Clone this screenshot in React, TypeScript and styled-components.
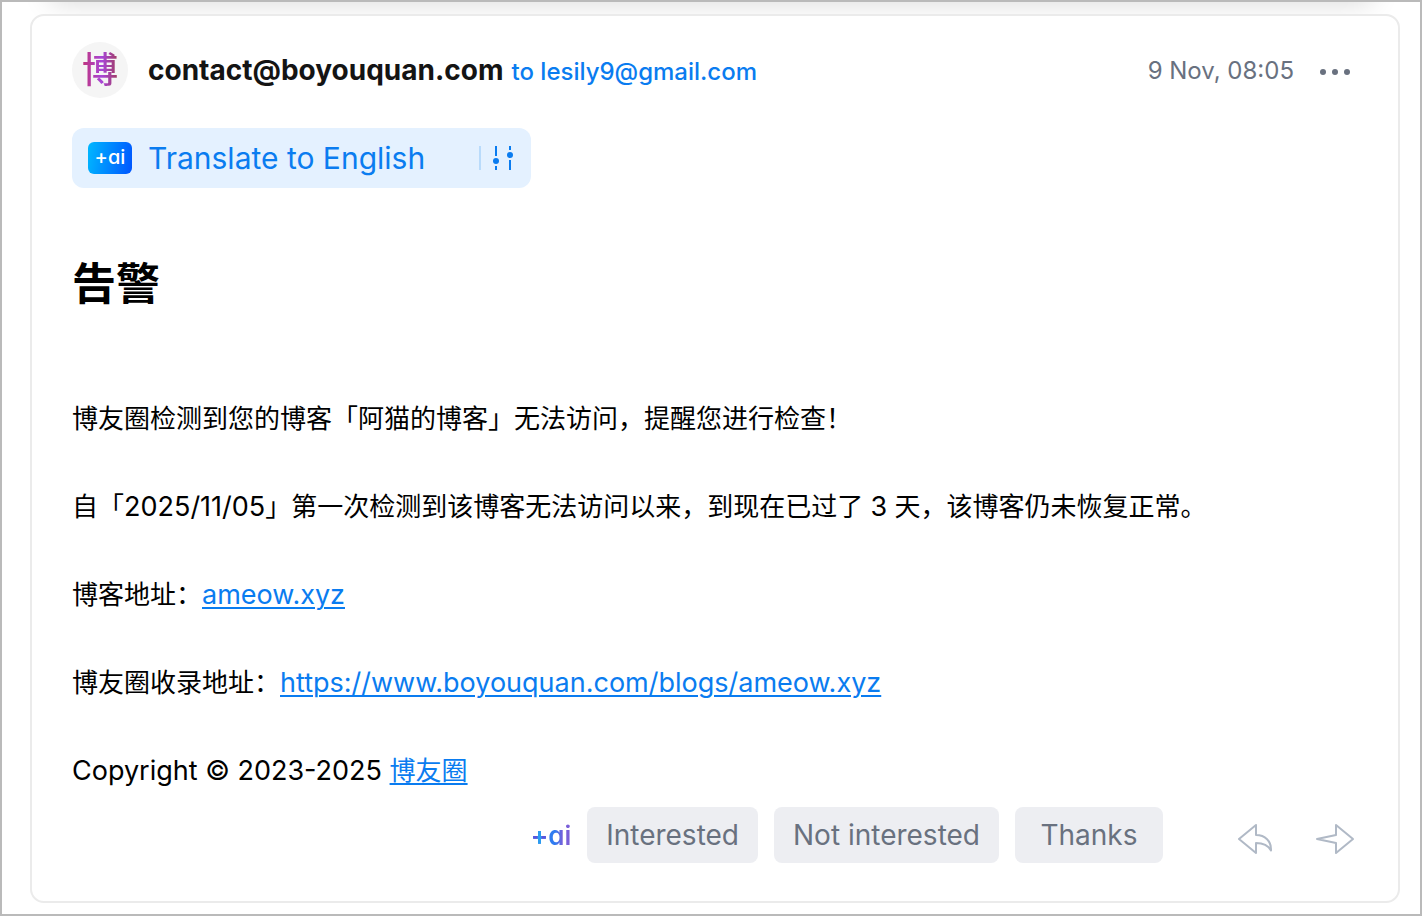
import React from "react";
import styled, { createGlobalStyle } from "styled-components";

const GlobalStyle = createGlobalStyle`
  * { box-sizing: border-box; }
  body {
    margin: 0;
    background: #fff;
    font-family: Inter, "Noto Sans CJK SC", sans-serif;
    color: #000;
  }
  button { font: inherit; border: 0; cursor: pointer; }
`;

const Window = styled.div`
  min-height: 100vh;
  padding: 12px 20px 11px 28px;
  border: 2px solid #bababa;
  position: relative;
  overflow: hidden;
`;

const ToolbarShadow = styled.div`
  position: absolute;
  top: -22px;
  left: 48px;
  right: 48px;
  height: 20px;
  box-shadow: 0 0 28px rgba(0, 0, 0, 0.2);
`;

const Card = styled.article`
  position: relative;
  display: flex;
  flex-direction: column;
  min-height: calc(100vh - 27px);
  padding: 26px 40px 38px;
  border: 2px solid #ebebeb;
  border-radius: 14px;
  background: #fff;
`;

const Header = styled.header`
  display: flex;
  align-items: center;
  height: 56px;
`;

const Avatar = styled.div`
  width: 56px;
  height: 56px;
  margin-right: 20px;
  border-radius: 50%;
  background: #f5f5f5;
  text-align: center;
`;

const AvatarLetter = styled.span`
  font-size: 36px;
  font-weight: 500;
  line-height: 56px;
  background: linear-gradient(90deg, #c0337a 0%, #a846d8 55%, #a03c60 100%);
  background-clip: text;
  color: transparent;
`;

const Addresses = styled.div`
  display: flex;
  align-items: baseline;
  gap: 8px;
  flex: 1;
`;

const Sender = styled.strong`
  font-size: 28px;
  font-weight: 700;
  color: #141414;
`;

const Recipient = styled.a`
  font-size: 24px;
  font-weight: 500;
  color: #0a7cf0;
  text-decoration: none;
`;

const SentAt = styled.time`
  font-size: 24px;
  line-height: 32px;
  padding-top: 2px;
  color: #69717f;
`;

const MoreButton = styled.button`
  width: 48px;
  height: 48px;
  margin-left: 16px;
  padding: 0;
  background: none;
`;

const TranslateBar = styled.div`
  display: flex;
  align-items: center;
  align-self: flex-start;
  height: 60px;
  margin-top: 30px;
  padding: 0 8px 0 16px;
  border-radius: 12px;
  background: #e4f1ff;
`;

const TranslateButton = styled.button`
  display: flex;
  align-items: center;
  gap: 16px;
  padding: 0 54px 0 0;
  background: none;
  font-size: 30px;
  color: #0a7cf0;
`;

const AiBadge = styled.span`
  width: 44px;
  height: 32px;
  border-radius: 6px;
  background: linear-gradient(100deg, #00b8ff, #0055ff);
  color: #fff;
  font-size: 20px;
  line-height: 30px;
  font-weight: 500;
  font-feature-settings: "cv11";
`;

const SettingsButton = styled.button`
  display: flex;
  padding: 0;
  background: none;
`;

const Title = styled.h1`
  margin: 64px 0 0;
  font-size: 44px;
  line-height: 64px;
  font-weight: 700;
`;

const Body = styled.div`
  display: flex;
  flex-direction: column;
  gap: 52px;
  margin-top: 85px;
  font-size: 26px;
  line-height: 36px;
`;

const Paragraph = styled.p`
  margin: 0;
`;

const Latin = styled.span`
  font-size: 27px;
  line-height: 1;
`;

const Link = styled.a`
  color: #0a7cf0;
  font-size: 27px;
  line-height: 1;
  text-decoration: underline;
  text-decoration-thickness: 2px;
  text-underline-offset: 3px;
`;

const CjkLink = styled(Link)`
  font-size: 26px;
`;

const Footer = styled.footer`
  display: flex;
  align-items: center;
  justify-content: flex-end;
  gap: 16px;
  margin-top: auto;
`;

const AiMark = styled.span`
  font-size: 26px;
  font-weight: 600;
  font-feature-settings: "cv11";
  background: linear-gradient(90deg, #2f7bf0 60%, #7a5fd8 80%);
  background-clip: text;
  color: transparent;
`;

const AiPlus = styled.span`
  background: linear-gradient(90deg, #5a55dc 35%, #2a9df0 42%, #2a9df0 58%, #5a55dc 65%);
  background-clip: text;
`;

const ReplyChip = styled.button`
  min-width: 148px;
  height: 56px;
  padding: 0 19px;
  border-radius: 8px;
  background: #edeef2;
  color: #69717f;
  font-size: 28px;
`;

const Actions = styled.div`
  display: flex;
  gap: 32px;
  margin-left: 51px;
`;

const IconButton = styled.button`
  width: 48px;
  height: 48px;
  padding: 0;
  background: none;
`;

export default function App() {
  return (
    <>
      <GlobalStyle />
      <Window>
        <ToolbarShadow />
        <Card>
          <Header>
            <Avatar>
              <AvatarLetter>博</AvatarLetter>
            </Avatar>
            <Addresses>
              <Sender>contact@boyouquan.com</Sender>
              <Recipient href="mailto:lesily9@gmail.com">to lesily9@gmail.com</Recipient>
            </Addresses>
            <SentAt>9 Nov, 08:05</SentAt>
            <MoreButton aria-label="More actions">
              <svg width="48" height="48" viewBox="0 0 48 48" fill="#69717f">
                <circle cx="13" cy="26" r="3" />
                <circle cx="25" cy="26" r="3" />
                <circle cx="37" cy="26" r="3" />
              </svg>
            </MoreButton>
          </Header>

          <TranslateBar>
            <TranslateButton>
              <AiBadge>+ai</AiBadge>
              Translate to English
            </TranslateButton>
            <SettingsButton aria-label="Translation settings">
              <svg width="44" height="32" viewBox="0 0 44 32" fill="none">
                <path d="M1 4v24" stroke="#b9dbfb" strokeWidth="2" />
                <path d="M17 4v10M17 24v4M31 4v4M31 18v10" stroke="#0a7cf0" strokeWidth="2" />
                <circle cx="17" cy="19" r="3" fill="#0a7cf0" />
                <circle cx="31" cy="13" r="3" fill="#0a7cf0" />
              </svg>
            </SettingsButton>
          </TranslateBar>

          <Title>告警</Title>

          <Body>
            <Paragraph>博友圈检测到您的博客「阿猫的博客」无法访问，提醒您进行检查！</Paragraph>
            <Paragraph>
              自「<Latin>2025/11/05</Latin>」第一次检测到该博客无法访问以来，到现在已过了 <Latin>3</Latin> 天，该博客仍未恢复正常。
            </Paragraph>
            <Paragraph>
              博客地址：<Link href="#blog">ameow.xyz</Link>
            </Paragraph>
            <Paragraph>
              博友圈收录地址：<Link href="#listing">https://www.boyouquan.com/blogs/ameow.xyz</Link>
            </Paragraph>
            <Paragraph>
              <Latin>Copyright © 2023-2025 </Latin>
              <CjkLink href="#home">博友圈</CjkLink>
            </Paragraph>
          </Body>

          <Footer>
            <AiMark>
              <AiPlus>+</AiPlus>ai
            </AiMark>
            <ReplyChip>Interested</ReplyChip>
            <ReplyChip>Not interested</ReplyChip>
            <ReplyChip>Thanks</ReplyChip>
            <Actions>
              <IconButton aria-label="Reply">
                <svg width="48" height="48" viewBox="0 0 48 48" fill="none" stroke="#b0b9c6" strokeWidth="2" strokeLinejoin="round">
                  <path d="M9 28 26 14V24C35 24 41.500 30 41 39.500C38 34 33 32 26 32V42Z" />
                </svg>
              </IconButton>
              <IconButton aria-label="Forward">
                <svg width="48" height="48" viewBox="0 0 48 48" fill="none" stroke="#b0b9c6" strokeWidth="2" strokeLinejoin="round">
                  <path d="M7 28 26 24V14L43 28 26 42V32Z" />
                </svg>
              </IconButton>
            </Actions>
          </Footer>
        </Card>
      </Window>
    </>
  );
}
